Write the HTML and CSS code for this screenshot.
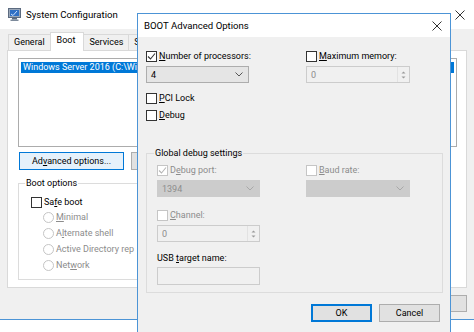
FILE: index.html
```html
<!DOCTYPE html>
<html>
<head>
    <title>System Configuration</title>
    <link rel="stylesheet" href="styles.css">
</head>
<body>
    <div class="desktop">
        <div class="window main-window">
            <div class="titlebar">
                <svg class="app-icon" width="13" height="13" viewBox="0 0 13 13">
                    <rect x="0.5" y="0.5" width="12" height="9" fill="#9aa7b8" stroke="#5c6b80"/>
                    <rect x="2" y="2" width="9" height="6" fill="#2f6fc4"/>
                    <path d="M3 6 L5 7.5 L9 3" stroke="#cfe3ff" stroke-width="1" fill="none"/>
                    <rect x="4" y="10" width="5" height="1.5" fill="#5c6b80"/>
                    <rect x="2.5" y="11.5" width="8" height="1.5" fill="#7d8a9b"/>
                </svg>
                <span class="title">System Configuration</span>
                <span class="close">
                    <svg width="10" height="10" viewBox="0 0 10 10"><path d="M0.5 0.5 L9.5 9.5 M9.5 0.5 L0.5 9.5" stroke="#333" stroke-width="1"/></svg>
                </span>
            </div>
            <div class="window-body">
                <div class="tabs">
                    <div class="tab">General</div>
                    <div class="tab active">Boot</div>
                    <div class="tab">Services</div>
                    <div class="tab">Startup</div>
                </div>
                <div class="tab-panel">
                    <div class="listbox">
                        <div class="list-item selected">Windows Server 2016 (C:\Wi</div>
                    </div>
                    <div class="button-row">
                        <button class="btn btn-focus">Ad<u>v</u>anced options...</button>
                        <button class="btn"></button>
                    </div>
                    <fieldset class="group boot-options">
                        <legend>Boot options</legend>
                        <label class="check">
                            <span class="cb"></span><span>Sa<u>f</u>e boot</span>
                        </label>
                        <div class="radios">
                            <label class="radio disabled"><span class="rb"></span><span><u>M</u>inimal</span></label>
                            <label class="radio disabled"><span class="rb"></span><span>A<u>l</u>ternate shell</span></label>
                            <label class="radio disabled"><span class="rb"></span><span>Active Directory rep</span></label>
                            <label class="radio disabled"><span class="rb"></span><span>Net<u>w</u>ork</span></label>
                        </div>
                    </fieldset>
                </div>
                <div class="footer">
                    <button class="btn"></button>
                </div>
            </div>
        </div>

        <div class="window dialog">
            <div class="titlebar dlg-titlebar">
                <span class="title">BOOT Advanced Options</span>
                <span class="close">
                    <svg width="10" height="10" viewBox="0 0 10 10"><path d="M0.5 0.5 L9.5 9.5 M9.5 0.5 L0.5 9.5" stroke="#333" stroke-width="1"/></svg>
                </span>
            </div>
            <div class="dlg-body">
                <div class="pair top-pair">
                    <div class="field">
                        <label class="check">
                            <span class="cb">
                                <svg width="9" height="9" viewBox="0 0 9 9"><path d="M1 4.5 L3.5 7 L8 1.5" stroke="#333" stroke-width="1.1" fill="none"/></svg>
                            </span><span><u>N</u>umber of processors:</span>
                        </label>
                        <div class="combo">
                            <span>4</span>
                            <svg width="8" height="5" viewBox="0 0 8 5"><path d="M0.5 0.5 L4 4 L7.5 0.5" stroke="#555" stroke-width="1" fill="none"/></svg>
                        </div>
                    </div>
                    <div class="field">
                        <label class="check">
                            <span class="cb"></span><span><u>M</u>aximum memory:</span>
                        </label>
                        <div class="spin disabled-box">
                            <span>0</span>
                            <span class="spin-arrows">
                                <svg width="5" height="10" viewBox="0 0 5 10"><path d="M0.5 3.5 L2.5 1.5 L4.5 3.5 Z M0.5 6.5 L2.5 8.5 L4.5 6.5 Z" fill="#9a9a9a"/></svg>
                            </span>
                        </div>
                    </div>
                </div>

                <label class="check option"><span class="cb"></span><span><u>P</u>CI Lock</span></label>
                <label class="check option"><span class="cb"></span><span><u>D</u>ebug</span></label>

                <fieldset class="group debug-settings">
                    <legend>Global debug settings</legend>
                    <div class="pair">
                        <div class="field">
                            <label class="check disabled">
                                <span class="cb">
                                    <svg width="9" height="9" viewBox="0 0 9 9"><path d="M1 4.5 L3.5 7 L8 1.5" stroke="#b5b5b5" stroke-width="1.1" fill="none"/></svg>
                                </span><span>D<u>e</u>bug port:</span>
                            </label>
                            <div class="combo combo-disabled">
                                <span>1394</span>
                                <svg width="8" height="5" viewBox="0 0 8 5"><path d="M0.5 0.5 L4 4 L7.5 0.5" stroke="#a8a8a8" stroke-width="1" fill="none"/></svg>
                            </div>
                        </div>
                        <div class="field">
                            <label class="check disabled">
                                <span class="cb"></span><span><u>B</u>aud rate:</span>
                            </label>
                            <div class="combo combo-disabled">
                                <span></span>
                                <svg width="8" height="5" viewBox="0 0 8 5"><path d="M0.5 0.5 L4 4 L7.5 0.5" stroke="#a8a8a8" stroke-width="1" fill="none"/></svg>
                            </div>
                        </div>
                    </div>
                    <div class="field channel">
                        <label class="check disabled">
                            <span class="cb"></span><span><u>C</u>hannel:</span>
                        </label>
                        <div class="spin disabled-box">
                            <span>0</span>
                            <span class="spin-arrows">
                                <svg width="5" height="10" viewBox="0 0 5 10"><path d="M0.5 3.5 L2.5 1.5 L4.5 3.5 Z M0.5 6.5 L2.5 8.5 L4.5 6.5 Z" fill="#9a9a9a"/></svg>
                            </span>
                        </div>
                    </div>
                    <div class="field usb">
                        <div class="plain-label">USB <u>t</u>arget name:</div>
                        <div class="textbox disabled-box"></div>
                    </div>
                </fieldset>

                <div class="dlg-buttons">
                    <button class="btn btn-default">OK</button>
                    <button class="btn">Cancel</button>
                </div>
            </div>
        </div>
    </div>
</body>
</html>
```

FILE: styles.css
```css
body {
    margin: 0;
    background-color: #ffffff;
    font-family: Roboto, "Noto Sans", sans-serif;
    font-size: 9px;
    color: #000;
    overflow: hidden;
}

.desktop {
    position: relative;
    width: 474px;
    height: 332px;
    overflow: hidden;
}

u {
    text-decoration-thickness: 1px;
    text-underline-offset: 1px;
}

button {
    font-family: inherit;
    font-size: inherit;
    color: #000;
}

/* windows */

.window {
    box-sizing: border-box;
    background-color: #f0f0f0;
}

.main-window {
    width: 478px;
    height: 320px;
    border-bottom: 1px solid #4c94d6;
}

.titlebar {
    display: flex;
    align-items: center;
    height: 29px;
    background-color: #fff;
}

.app-icon {
    margin-left: 8px;
    margin-right: 5px;
}

.title {
    font-size: 9.6px;
    flex: 1;
}

.close {
    display: flex;
    align-items: center;
    justify-content: center;
    width: 36px;
    height: 100%;
}

.window-body {
    padding: 0 11px 0 7px;
}

/* tabs */

.tabs {
    display: flex;
    align-items: flex-end;
    height: 21px;
    padding-left: 1px;
}

.tab {
    box-sizing: border-box;
    height: 16px;
    padding: 0 5px;
    line-height: 15px;
    border: 1px solid #d9d9d9;
    border-bottom: none;
    border-right: none;
    background-color: #f0f0f0;
}

.tab.active {
    height: 19px;
    padding: 0 8px 0 6px;
    background-color: #fff;
    border-right: 1px solid #d9d9d9;
    margin-bottom: -1px;
    position: relative;
    z-index: 1;
}

.tab.active + .tab {
    border-left: none;
}

.tab-panel {
    box-sizing: border-box;
    height: 238px;
    padding: 7px 9px 0 10px;
    background-color: #fff;
    border: 1px solid #d9d9d9;
}

.listbox {
    box-sizing: border-box;
    height: 89px;
    padding: 3px 2px;
    border: 1px solid #acacac;
}

.list-item {
    height: 11px;
    line-height: 11px;
    padding-left: 2px;
    white-space: nowrap;
    overflow: hidden;
}

.list-item.selected {
    background-color: #0078d7;
    color: #fff;
}

.button-row {
    display: flex;
    gap: 7px;
    margin-top: 5px;
    padding-left: 1px;
}

.btn {
    box-sizing: border-box;
    height: 18px;
    padding: 0;
    border: 1px solid #adadad;
    background-color: #e1e1e1;
    white-space: nowrap;
    width: 60px;
}

.button-row .btn {
    width: 105px;
}

.btn-focus {
    background-color: #e5f1fb;
    border-color: #0078d7;
}

/* group boxes */

.group {
    margin: 0;
    border: 1px solid #dcdcdc;
    padding: 0;
}

.group legend {
    padding: 0 1px;
    line-height: 12px;
}

.boot-options {
    box-sizing: border-box;
    width: 260px;
    height: 103px;
    margin-top: 7px;
    padding: 7px 0 0 12px;
}

.boot-options legend {
    margin-left: -6px;
}

.check,
.radio {
    display: flex;
    align-items: center;
    height: 12px;
    gap: 2px;
    white-space: nowrap;
}

.cb,
.rb {
    box-sizing: border-box;
    display: flex;
    align-items: center;
    justify-content: center;
    width: 11px;
    height: 11px;
    border: 1px solid #333;
    background-color: #fff;
}

.rb {
    border-radius: 50%;
    border-color: #c5c5c5;
}

.radios {
    display: flex;
    flex-direction: column;
    gap: 4px;
    margin-top: 3px;
    padding-left: 12px;
}

.disabled,
.disabled-box {
    color: #8c8c8c;
}

.check.disabled .cb {
    border-color: #c5c5c5;
}

.footer {
    display: flex;
    justify-content: flex-end;
    padding-top: 7px;
}

.footer .btn {
    width: 60px;
    height: 17px;
}

/* dialog */

.dialog {
    position: absolute;
    left: 137px;
    top: 13px;
    width: 314px;
    height: 330px;
    border: 1px solid #4c94d6;
}

.dlg-titlebar {
    height: 23px;
}

.dlg-titlebar .title {
    padding-left: 6px;
}

.dlg-titlebar .close {
    width: 26px;
}

.dlg-body {
    padding: 13px 10px 0 8px;
}

.pair {
    display: grid;
    grid-template-columns: 103px 104px;
    column-gap: 57px;
}

.field .check {
    margin-bottom: 4px;
}

.combo,
.spin,
.textbox {
    box-sizing: border-box;
    display: flex;
    align-items: center;
    justify-content: space-between;
    height: 17px;
    padding: 0 5px 0 4px;
    border: 1px solid #adadad;
    background-color: #e5e5e5;
}

.combo-disabled {
    background-color: #cccccc;
    border-color: #cccccc;
    color: #8c8c8c;
}

.spin,
.textbox {
    background-color: #f0f0f0;
    border-color: #cccccc;
    padding-right: 0;
}

.spin-arrows {
    display: flex;
    align-items: center;
    justify-content: center;
    width: 11px;
    height: 100%;
    border-left: 1px solid #e2e2e2;
}

.option {
    margin-top: 9px;
}

.option + .option {
    margin-top: 5px;
}

.debug-settings {
    box-sizing: border-box;
    width: 297px;
    height: 146px;
    margin-top: 26px;
    padding: 5px 0 0 10px;
}

.debug-settings legend {
    margin-left: -3px;
}

.debug-settings .pair {
    column-gap: 46px;
}

.channel {
    width: 103px;
    margin-top: 12px;
}

.usb {
    width: 103px;
    margin-top: 10px;
}

.plain-label {
    height: 12px;
    line-height: 12px;
    margin-bottom: 3px;
}

.textbox {
    height: 18px;
}

.dlg-buttons {
    display: flex;
    justify-content: flex-end;
    gap: 7px;
    margin-top: 11px;
}

.dlg-buttons .btn {
    width: 61px;
    height: 18px;
}

.btn-default {
    border: 2px solid #0078d7;
}
```
